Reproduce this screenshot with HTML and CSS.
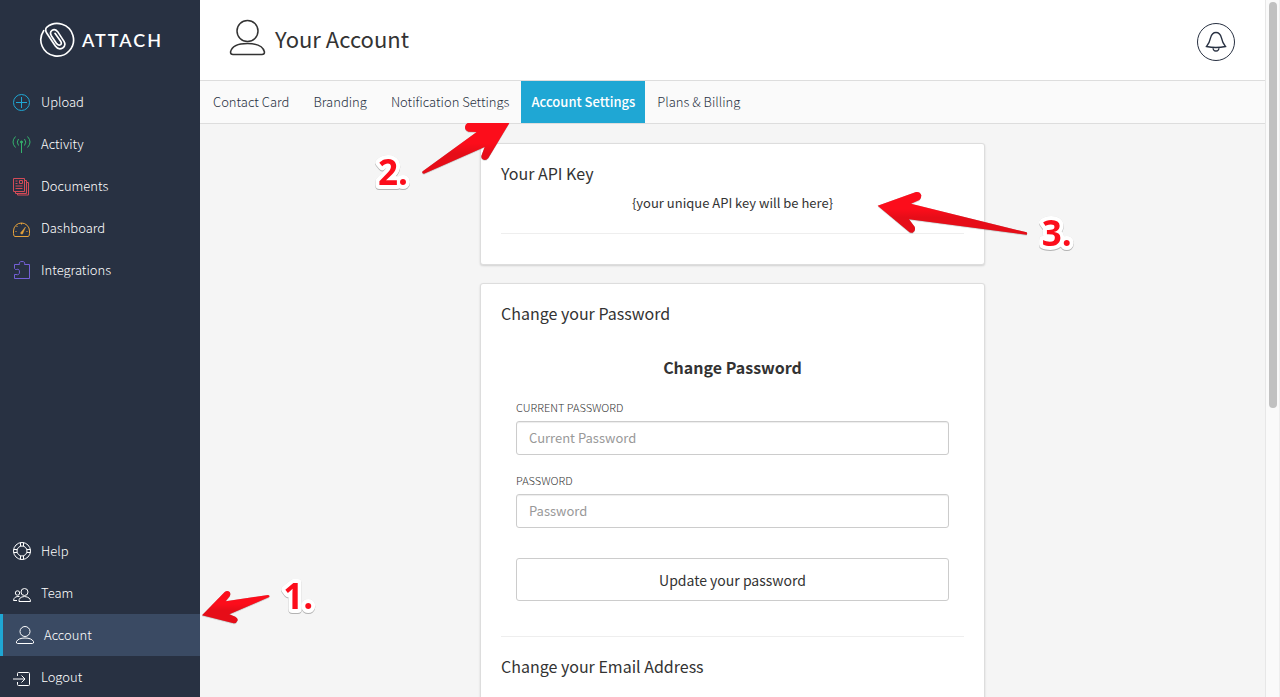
FILE: index.html
```
<!DOCTYPE html>
<html lang="en">
<head>
  <meta charset="utf-8">
  <title>Your Account</title>
  <link rel="stylesheet" href="styles.css">
</head>
<body>
  <div class="page">
    <aside class="sidebar">
      <a class="logo" href="#">
        <svg width="36" height="36" viewBox="117 66 108 108" fill="none" stroke="#fff" stroke-width="5" stroke-linecap="round" stroke-linejoin="round">
          <path d="M131 92 A49 49 0 1 0 140 82 Q134 90 140 99 L166 138 Q175 151 188 144 Q199 136 192 124 L173 95 Q165 85 156 91 Q148 97 154 107 L170 131 Q176 138 182 134 Q186 130 182 124 L165 100"/>
        </svg>
        <span>ATTACH</span>
      </a>

      <nav>
        <ul class="menu">
          <li><a href="#">
            <svg class="icon" viewBox="0 0 20 20" stroke="#1fa7d4"><circle cx="9.5" cy="10.5" r="8"/><path d="M9.5 5v11M4 10.5h11"/></svg>
            Upload</a></li>
          <li><a href="#">
            <svg class="icon" viewBox="0 0 20 20" stroke="#35b36d"><path d="M9.5 9v10M6.5 11.5Q4 8 6.5 5M12.500 11.500Q15 8 12.500 5M3.500 13.500Q-1.500 8 3.500 2.500M15.500 13.500Q20.500 8 15.500 2.500"/><circle cx="9.500" cy="8" r="1" fill="#35b36d"/></svg>
            Activity</a></li>
          <li><a href="#">
            <svg class="icon" viewBox="0 0 20 20" stroke="#d34b57"><path d="M1.500 2.500h11v13h-11zM12.500 4.500h2v13h-11v-2M14.500 6.500h2v12.500h-11v-1.500M3.500 5h2M3.500 7.500h2M3.500 10h7M3.500 12.500h7M7.500 4.500h3v3h-3z"/></svg>
            Documents</a></li>
          <li><a href="#">
            <svg class="icon" viewBox="0 0 20 20" stroke="#e5a23c"><path d="M3 18.500Q1.500 18.500 1.500 15.500V13A8 8 0 0 1 17.500 13V15.500Q17.500 18.500 16 18.500zM9.500 5v1.500M4.500 8l1 1M3.500 13.500h1M15.500 13.500h-1"/><path d="M8.500 15L13.500 9L10.500 16Q9 16.500 8.500 15z" fill="#e5a23c" stroke-width=".5"/></svg>
            Dashboard</a></li>
          <li><a href="#">
            <svg class="icon" viewBox="0 0 20 20" stroke="#7560d8"><path d="M2.500 8.500V4.500H7.500Q6.500 1.500 10 1.500T12.500 4.500H17.500V18.500H2.500V14.500H4Q7.500 15.500 7.500 12T4.500 9.500Q3.500 10 2.500 8.500z"/></svg>
            Integrations</a></li>
        </ul>
      </nav>

      <nav class="bottom">
        <ul class="menu">
          <li><a href="#">
            <svg class="icon" viewBox="0 0 20 20" stroke="#fff"><circle cx="10" cy="10" r="8.500"/><circle cx="10" cy="10" r="5"/><path d="M8.500 1.500v3.500M11.500 1.500v3.500M8.500 15v3.500M11.500 15v3.500M1.500 8.500h3.500M1.500 11.500h3.500M15 8.500h3.500M15 11.500h3.500"/></svg>
            Help</a></li>
          <li><a href="#">
            <svg class="icon" viewBox="0 0 20 20" stroke="#fff"><circle cx="12.500" cy="9" r="3.500"/><path d="M7 18.500Q6.500 14 12.500 13.500Q18.500 14 18.500 18.500zM7.500 13.500Q2 13 1.500 17.500H5"/><circle cx="5.500" cy="10" r="2.200"/></svg>
            Team</a></li>
          <li class="active"><a href="#">
            <svg class="icon" viewBox="0 0 20 20" stroke="#fff"><circle cx="10" cy="6.500" r="5"/><path d="M2.500 18.500Q1 18.500 1.500 16.500Q3.500 13 10 13T18.500 16.500Q19 18.500 17.500 18.500z"/></svg>
            Account</a>
            <svg class="note note-account" width="120" height="48" viewBox="600 141 360 144">
              <defs>
                <linearGradient id="red" x1="0" y1="0" x2="0" y2="1">
                  <stop offset="0.4" stop-color="#fc0d1b"/>
                  <stop offset="0.6" stop-color="#e60d18"/>
                </linearGradient>
              </defs>
              <path d="M606 256L674 186Q682 180 689 186Q693 192 689 199L677 214L804 195Q812 198 806 202L688 253L706 260Q714 264 713 271Q709 281 701 280z"/>
              <text x="850" y="238">1.</text>
            </svg>
          </li>
          <li><a href="#">
            <svg class="icon" viewBox="0 0 20 20" stroke="#fff"><path d="M5.500 9V6.500Q5.500 5.500 6.500 5.500H16.500Q17.500 5.500 17.500 6.500V17.500Q17.500 18.500 16.500 18.500H6.500Q5.500 18.500 5.500 17.500V15M1 12h11.500M9.500 8.500L13 12L9.500 15.500"/></svg>
            Logout</a></li>
        </ul>
      </nav>
    </aside>

    <main class="main">
      <header class="header">
        <svg class="user" width="38" height="38" viewBox="0 0 38 38"><circle cx="18.500" cy="12" r="10.500"/><path d="M4 35.500Q1.500 35.500 1.500 33Q3.500 24.500 18.500 24.500T35.500 33Q35.500 35.500 33 35.500z"/></svg>
        <h1>Your Account</h1>
        <button class="bell" type="button" aria-label="Notifications">
          <svg width="22" height="22" viewBox="0 0 22 22"><path d="M1.500 15.500Q4.500 12 5.500 7Q7 1.500 11 1.500T16.500 7Q17.500 12 20.500 15.500Q11 17.500 1.500 15.500zM8 16.500Q8 20 11 20T14 16.500"/></svg>
        </button>
      </header>

      <nav class="tabs">
        <a href="#">Contact Card</a>
        <a href="#">Branding</a>
        <a href="#">Notification Settings</a>
        <div class="current">
          <a href="#">Account Settings</a>
          <svg class="note note-tab" width="138" height="68" viewBox="519 369 414 204">
            <path d="M803 369L928 369L865 474Q858 483 848 478Q842 473 845 465L854 441L672 521Q664 520 668 514L830 396L806 395Q795 392 795 381Q796 372 803 369z"/>
            <text x="534" y="554">2.</text>
          </svg>
        </div>
        <a href="#">Plans &amp; Billing</a>
      </nav>

      <div class="content">
        <section class="card api">
          <h2>Your API Key</h2>
          <p>{your unique API key will be here}</p>
          <hr>
          <svg class="note note-key" width="198" height="61" viewBox="51 183 594 183">
            <path d="M53 227L168 186Q180 184 184 196Q184 205 178 210L153 221L500 307Q503 311 500 314L147 268L164 290Q168 303 158 308Q151 310 145 304z"/>
            <text x="545" y="348">3.</text>
          </svg>
        </section>

        <section class="card">
          <h2>Change your Password</h2>
          <form>
            <h3>Change Password</h3>
            <label for="current">Current Password</label>
            <input type="password" id="current" placeholder="Current Password">
            <label for="password">Password</label>
            <input type="password" id="password" placeholder="Password">
            <button type="submit">Update your password</button>
          </form>
          <hr>
          <h2>Change your Email Address</h2>
        </section>
      </div>
    </main>

    <div class="scrollbar" aria-hidden="true"><div class="thumb"></div></div>
  </div>
</body>
</html>
```
FILE: styles.css
```
* {
  box-sizing: border-box;
}

body {
  margin: 0;
  font-family: "Noto Sans CJK SC", "Noto Sans", sans-serif;
  font-size: 13px;
  line-height: 20px;
  color: #333333;
  background-color: #f5f5f5;
}

a {
  text-decoration: none;
}

.page {
  display: flex;
  height: 100vh;
  overflow: hidden;
}

/* Sidebar */
.sidebar {
  position: relative;
  z-index: 1;
  display: flex;
  flex-direction: column;
  flex: 0 0 200px;
  background-color: #283142;
}

.logo {
  display: flex;
  align-items: center;
  gap: 7px;
  height: 81px;
  padding: 0 0 2px 39px;
  font-family: Lato, sans-serif;
  font-size: 18px;
  font-weight: 600;
  letter-spacing: 2px;
  color: #ffffff;
}

.menu {
  list-style: none;
  margin: 0;
  padding: 0;
}

.menu li {
  position: relative;
}

.menu a {
  display: flex;
  align-items: center;
  gap: 9px;
  height: 42px;
  padding-left: 12px;
  font-weight: 300;
  color: #ffffff;
}

.menu .active a {
  border-left: 3px solid #1fa7d4;
  background-color: #3a4a63;
}

.bottom {
  margin-top: auto;
  margin-bottom: -1px;
}

.icon {
  width: 20px;
  height: 20px;
  fill: none;
  stroke-width: 1;
}

/* Main area */
.main {
  flex: 1;
  min-width: 0;
}

.header {
  display: flex;
  align-items: center;
  gap: 8px;
  height: 81px;
  padding: 0 30px 4px 29px;
  border-bottom: 1px solid #dddddd;
  background-color: #ffffff;
}

.user {
  fill: none;
  stroke: #333333;
  stroke-width: 1.5;
}

h1 {
  margin: 0;
  font-size: 22px;
  font-weight: normal;
  line-height: 32px;
}

.bell {
  display: flex;
  align-items: center;
  justify-content: center;
  width: 38px;
  height: 38px;
  margin: 8px 0 0 auto;
  padding: 0;
  border: 1px solid #283142;
  border-radius: 50%;
  background: none;
}

.bell svg {
  fill: none;
  stroke: #283142;
  stroke-width: 1.3;
}

.tabs {
  display: flex;
  height: 43px;
  padding-left: 1px;
  border-bottom: 1px solid #dddddd;
  background-color: #fafafa;
}

.tabs a {
  padding: 0 12px;
  line-height: 42px;
  font-weight: 300;
  color: #283142;
}

.tabs .current {
  position: relative;
}

.tabs .current a {
  display: block;
  padding: 0 10px;
  font-weight: 500;
  color: #ffffff;
  background-color: #1fa7d4;
}

.content {
  display: flex;
  flex-direction: column;
  align-items: center;
  gap: 18px;
  padding: 19px 20px;
}

.card {
  position: relative;
  width: 100%;
  max-width: 505px;
  padding: 20px 20px 30px;
  border: 1px solid #dddddd;
  border-radius: 3px;
  background-color: #ffffff;
  box-shadow: 0 1px 2px rgba(0, 0, 0, 0.15);
}

h2 {
  margin: 0;
  font-size: 16px;
  font-weight: normal;
  line-height: 18px;
}

hr {
  margin: 35px 0 20px;
  border: 0;
  border-top: 1px solid #eeeeee;
}

.api p {
  margin: 11px 0 0;
  text-align: center;
}

.api hr {
  margin: 20px 0 0;
}

form {
  display: flex;
  flex-direction: column;
  padding: 0 15px;
}

h3 {
  margin: 36px 0 6px;
  font-size: 16px;
  font-weight: bold;
  line-height: 18px;
  text-align: center;
}

label {
  margin: 18px 0 7px;
  font-size: 11px;
  font-weight: 300;
  line-height: 14px;
  text-transform: uppercase;
}

input {
  height: 34px;
  padding: 5px 12px 7px;
  border: 1px solid #cccccc;
  border-radius: 3px;
  font-family: inherit;
  font-size: 13px;
  box-shadow: inset 0 1px 1px rgba(0, 0, 0, 0.075);
}

input::placeholder {
  color: #999999;
}

form button {
  height: 43px;
  margin-top: 30px;
  border: 1px solid #cccccc;
  border-radius: 3px;
  font-family: inherit;
  font-size: 14px;
  color: #333333;
  background-color: #ffffff;
}

/* Numbered arrows */
.note {
  position: absolute;
  z-index: 2;
  overflow: visible;
  fill: #fc0d1b;
  pointer-events: none;
}

.note path {
  fill: url(#red);
  filter: drop-shadow(0 1px 2px rgba(0, 0, 0, 0.4));
}

.note text {
  font-family: "Open Sans", sans-serif;
  font-size: 105px;
  font-weight: bold;
  stroke: #ffffff;
  stroke-width: 24px;
  stroke-linejoin: round;
  paint-order: stroke;
  filter: drop-shadow(0 2px 2px rgba(0, 0, 0, 0.4));
}

.note-account {
  top: -37px;
  left: 100%;
}

.note-tab {
  top: 42px;
  right: calc(100% + 10px);
}

.note-key {
  top: 47px;
  left: 396px;
}

/* Scrollbar */
.scrollbar {
  flex: 0 0 15px;
  padding: 2px 2px 0 3px;
  border-left: 1px solid #e7e7e7;
  border-right: 1px solid #eeeeee;
  background-color: #fafafa;
}

.thumb {
  width: 8px;
  height: 58.4%;
  border-radius: 4px;
  background-color: #c1c1c1;
}
```
